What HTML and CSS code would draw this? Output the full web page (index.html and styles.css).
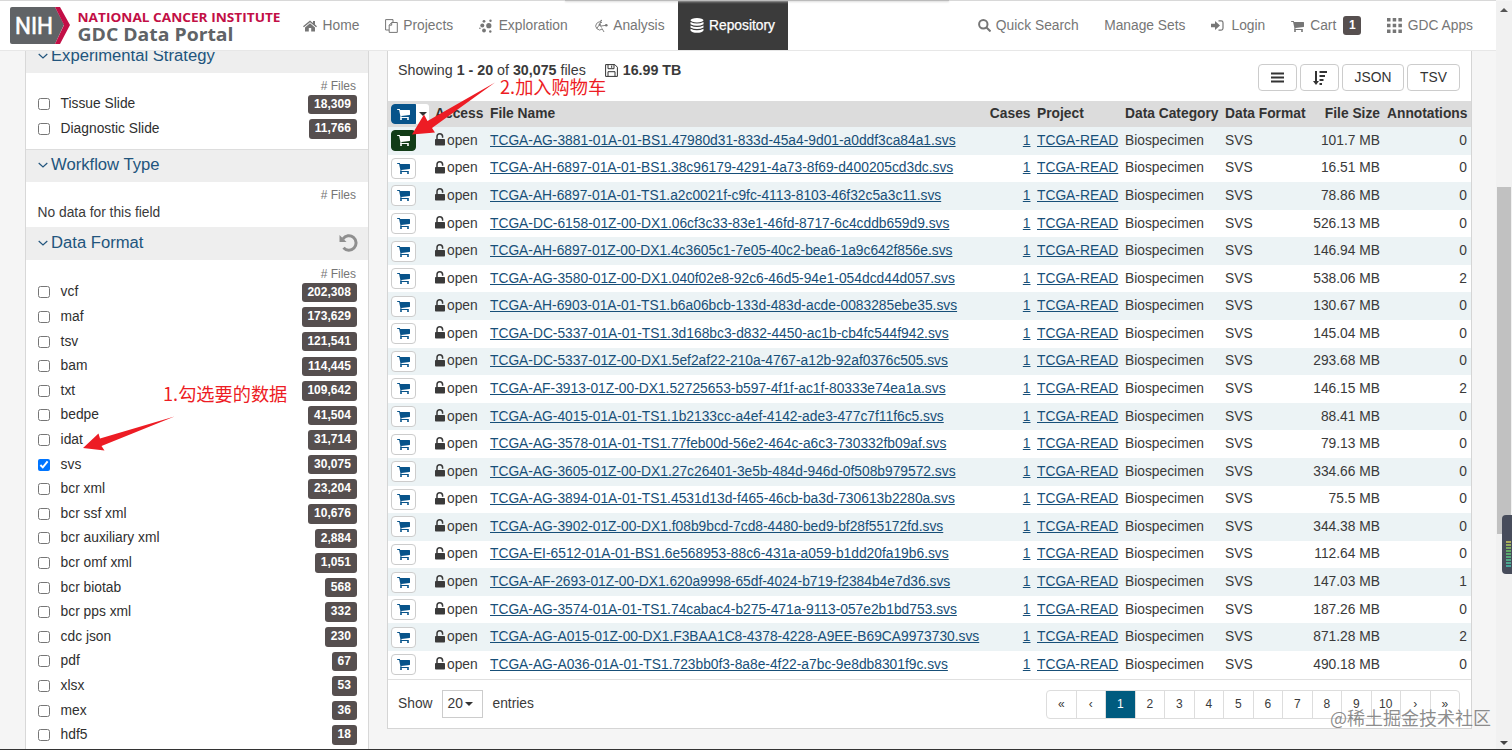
FILE: index.html
```html
<!DOCTYPE html>
<html lang="en">
<head>
<meta charset="utf-8">
<title>GDC Data Portal - Repository</title>
<link rel="stylesheet" href="styles.css">
</head>
<body>
<svg class="defs" aria-hidden="true">
  <symbol id="cart" viewBox="0 0 1664 1536"><path d="M640 1408q0 52-38 90t-90 38-90-38-38-90 38-90 90-38 90 38 38 90zm896 0q0 52-38 90t-90 38-90-38-38-90 38-90 90-38 90 38 38 90zm128-1088v512q0 24-16.500 42.500t-40.500 21.500l-1044 122q13 60 13 70 0 16-24 64h920q26 0 45 19t19 45-19 45-45 19h-1024q-26 0-45-19t-19-45q0-11 8-31.500t16-36 21.500-40 15.500-29.500l-177-823h-204q-26 0-45-19t-19-45 19-45 45-19h256q16 0 28.500 6.500t19.500 15.500 13 24.500 8 26 5.500 29.500 4.500 26h1201q26 0 45 19t19 45z"/></symbol>
  <symbol id="lock" viewBox="0 0 11 13"><path class="line" d="M2 6V3.600a2.700 2.700 0 0 1 5.600 0V4.800" stroke="currentColor" stroke-width="1.500"/><rect x="0" y="6" width="10" height="6.500" rx=".8"/></symbol>
</svg>

<header class="nav">
  <svg class="logo" width="272" height="40" viewBox="0 0 272 40">
    <path d="M2 1H45L54 18.500 45 38H2Q0 38 0 36V3Q0 1 2 1Z" fill="#606366"/>
    <path d="M45 1H50L60 19 50 38H45L54 19Z" fill="#c20f46"/>
    <text x="5" y="28" class="logo-nih" textLength="38" lengthAdjust="spacingAndGlyphs">NIH</text>
    <text x="67.500" y="15.500" class="logo-top" textLength="203" lengthAdjust="spacingAndGlyphs">NATIONAL CANCER INSTITUTE</text>
    <text x="67.500" y="34.500" class="logo-bottom" textLength="156" lengthAdjust="spacingAndGlyphs">GDC Data Portal</text>
  </svg>
  <nav class="menu">
    <a class="item home"><svg width="14" height="12" viewBox="0 0 14 12"><path d="M7 .5 0 6.300.9 7.300 7 2.300 13.100 7.300 14 6.300 12 4.600V1H10V3ZM7 3.300 2 7.400V11.500H5.800V8H8.200V11.500H12V7.400Z"/></svg>Home</a>
    <a class="item projects"><svg class="line" width="13" height="14" viewBox="0 0 13 14" stroke="currentColor"><path d="M4 11H.6V.6H8V3M6.700 3.500H12.300V13.400H4.200V6.200ZM6.700 3.500V6.200H4.200"/></svg>Projects</a>
    <a class="item exploration"><svg width="14" height="14" viewBox="0 0 14 14"><circle cx="5" cy="2.300" r="1.400"/><circle cx="11.500" cy="1.700" r="1.200"/><circle cx="3.300" cy="6.500" r="2"/><circle cx="9.800" cy="6.700" r="2.600"/><circle cx=".9" cy="9.300" r=".8"/><circle cx="5" cy="11.500" r="1.900"/><circle cx="11.300" cy="12.500" r="1.200"/></svg>Exploration</a>
    <a class="item analysis"><svg class="line" width="14" height="14" viewBox="0 0 14 14" stroke="currentColor"><path d="M8 3.600A4 4 0 1 0 8.300 10M3 9 5.700 5.500 7.500 8.500M5.700 5.500 7 1.500M7 7 12 6.300M8 9.500 10 13" stroke-width=".9"/><circle class="dot" cx="5.700" cy="5.700" r="1.100"/><circle class="dot" cx="7.300" cy="1.500" r=".7"/><circle class="dot" cx="12.300" cy="6.300" r="1.300"/><circle class="dot" cx="3" cy="9" r=".6"/></svg>Analysis</a>
    <a class="item repository"><svg width="14" height="15" viewBox="0 0 14 15"><ellipse cx="7" cy="2.300" rx="6.500" ry="2.200"/><path d="M.5 4Q7 7 13.500 4V6.200Q7 9.300.5 6.200ZM.5 7.500Q7 10.500 13.500 7.500V9.500Q7 12.500.5 9.500ZM.5 10.800Q7 13.900 13.500 10.800V12.500Q12 14.800 7 14.800T.5 12.500Z"/></svg>Repository</a>
  </nav>
  <div class="tools">
    <a class="item"><svg class="line" width="13" height="13" viewBox="0 0 13 13" stroke="currentColor" stroke-width="2"><circle cx="5.300" cy="5.300" r="4.200"/><path d="m8.500 8.500 4 4"/></svg>Quick Search</a>
    <a class="item sets">Manage Sets</a>
    <a class="item login"><svg width="13" height="11" viewBox="0 0 13 11"><path d="M0 3.700H4V1L9 5.500 4 10V7.300H0Z"/><path class="line" d="M7.500.9H10.200Q12 .9 12 2.700V8.300Q12 10.100 10.200 10.100H7.500" stroke="currentColor" stroke-width="1.200"/></svg>Login</a>
    <a class="item cartlink"><svg width="13" height="12"><use href="#cart"/></svg>Cart<b>1</b></a>
    <a class="item apps"><svg width="15" height="15" viewBox="0 0 15 15"><path d="M0 0h3.500v3.500H0zM5.700 0h3.500v3.500h-3.500zM11.400 0h3.500v3.500h-3.500zM0 5.700h3.500v3.500H0zM5.700 5.700h3.500v3.500h-3.500zM11.400 5.700h3.500v3.500h-3.500zM0 11.400h3.500v3.500H0zM5.700 11.400h3.500v3.500h-3.500zM11.400 11.400h3.500v3.500h-3.500z"/></svg>GDC Apps</a>
  </div>
  <div class="drop-shade"></div>
</header>

<main class="page">
  <aside class="facets">
    <section>
      <h2><svg class="line" width="10" height="7" viewBox="0 0 10 7"><path d="m.7 1 4.300 4 4.300-4"/></svg>Experimental Strategy</h2>
      <div class="count-head"># Files</div>
      <div class="facet-rows" data-list="strategy"></div>
    </section>
    <section class="workflow">
      <h2><svg class="line" width="10" height="7" viewBox="0 0 10 7"><path d="m.7 1 4.300 4 4.300-4"/></svg>Workflow Type</h2>
      <div class="count-head"># Files</div>
      <p class="empty">No data for this field</p>
    </section>
    <section class="format">
      <h2><svg class="line" width="10" height="7" viewBox="0 0 10 7"><path d="m.7 1 4.300 4 4.300-4"/></svg>Data Format
        <svg class="undo" width="19" height="18" viewBox="0 0 19 18"><path class="line" d="M4 4.800A7.200 7.200 0 1 1 4.500 13.800" stroke="#8f8f8f" stroke-width="3"/><path d="M.5 1V8H7.500Z" fill="#8f8f8f"/></svg></h2>
      <div class="count-head"># Files</div>
      <div class="facet-rows" data-list="format"></div>
    </section>
  </aside>

  <section class="results">
    <div class="summary">
      <div class="showing">Showing <b>1 - 20</b> of <b>30,075</b> files
        <svg class="disk line" width="13" height="13" viewBox="0 0 13 13" stroke="#333"><path d="M.6.6H9.800L12.400 3.200V12.400H.6ZM3 .6V4.700H9V.6M6.700 1.500V3.800M3 12.400V7.700H10V12.400"/></svg><b>16.99 TB</b></div>
      <div class="actions">
        <button class="w-icon"><svg width="13" height="11" viewBox="0 0 13 11"><path d="M0 .5h13v2H0zM0 4.500h13v2H0zM0 8.500h13v2H0z"/></svg></button>
        <button class="w-icon"><svg width="14" height="14" viewBox="0 0 14 14"><path d="M2 0H4V10H6L3 14 0 10H2ZM6.500 0H14V2H6.500ZM6.500 4H12V6H6.500ZM6.500 8H10.500V10H6.500ZM6.500 12H9V14H6.500Z"/></svg></button>
        <button class="w-json">JSON</button>
        <button class="w-tsv">TSV</button>
      </div>
    </div>
    <div class="row head">
      <span class="add-all"><i class="cart-btn blue"><svg><use href="#cart"/></svg></i><i class="caret-box"><i class="caret"></i></i></span>
      <span>Access</span><span>File Name</span><span class="r">Cases</span><span></span><span>Project</span><span>Data Category</span><span>Data Format</span><span class="r">File Size</span><span></span><span class="r">Annotations</span>
    </div>
    <div id="files"></div>
    <footer class="pager-bar">
      <span>Show</span><span class="select">20<i class="caret"></i></span><span>entries</span>
      <div class="pager"><a>«</a><a>‹</a><a class="on">1</a><a>2</a><a>3</a><a>4</a><a>5</a><a>6</a><a>7</a><a>8</a><a>9</a><a>10</a><a>›</a><a>»</a></div>
    </footer>
  </section>
</main>

<div class="scrollbar"><i class="up"></i><i class="thumb"></i><i class="down"></i></div>
<div class="meter"><i></i></div>
<svg class="arrows" width="1512" height="750" viewBox="0 0 1512 750">
  <path d="M495 82.500 432 128 435 132.500 412 134.500 424 114.500 427.500 121ZM174.500 416.500 101.500 446 104.500 450.500 83 448 98.500 433.500 100 438.500Z" fill="#ed1c24"/>
</svg>
<div class="note one">1.勾选要的数据</div>
<div class="note two">2.加入购物车</div>
<div class="watermark">@稀土掘金技术社区</div>
<div class="edge"></div>
<script src="app.js"></script>
</body>
</html>
```

FILE: styles.css
```css
* { box-sizing: border-box; }
body { margin: 0; width: 1512px; height: 750px; overflow: hidden; position: relative; background: #f5f5f5; color: #3a3a3a; font: 13.800px/20px "Liberation Sans", Arial, sans-serif; }
svg { fill: currentColor; flex: none; }
.line { fill: none; }
.dot { fill: currentColor; stroke: none; }
.defs { position: absolute; width: 0; height: 0; }

.nav { position: relative; z-index: 3; width: 1496px; height: 51px; display: flex; background: #fff; border-top: 1px solid #d8d8d8; border-bottom: 1px solid #e7e7e7; color: #767676; }
.logo { margin: 5px 0 0 10px; }
.logo text { font-family: "Open Sans", sans-serif; font-weight: 700; }
.logo .logo-nih { font: 400 24.500px Roboto, sans-serif; fill: #fff; stroke: #fff; stroke-width: .6px; }
.logo .logo-top { font-size: 13px; fill: #c20f46; }
.logo .logo-bottom { font-size: 18.500px; fill: #606366; }
.menu { display: flex; margin-left: 21px; }
.item { display: flex; align-items: center; height: 49px; white-space: nowrap; }
.home svg, .projects svg, .exploration svg, .analysis svg { margin-right: 5.500px; }
.projects { margin-left: 25.500px; }
.exploration { margin-left: 26px; }
.analysis { margin-left: 26px; }
.repository { position: relative; width: 110px; margin-left: 13px; padding-left: 12px; background: #3b3b3b; color: #fff; -webkit-text-stroke: .25px #fff; }
.repository svg { margin-right: 5.500px; }
.tools { display: flex; margin-left: auto; margin-right: 23px; }
.tools svg { margin-right: 5px; }
.sets { margin-left: 25.500px; }
.login { margin-left: 26px; }
.tools .login svg { margin-right: 7px; }
.cartlink { margin-left: 25.500px; }
.tools .cartlink svg { margin-right: 6.500px; }
.cartlink b { width: 18px; height: 19px; margin-left: 7px; border-radius: 3px; background: #564f4f; color: #fff; font-size: 12px; line-height: 19px; text-align: center; }
.apps { margin-left: 25.500px; }
.tools .apps svg { margin-right: 6px; }
.drop-shade { position: absolute; left: 565px; top: -1px; width: 384px; height: 1px; background: #bbb; box-shadow: 0 1px 2px #ccc; }

.page { display: flex; align-items: flex-start; height: 699px; overflow: hidden; padding-left: 25px; }
.facets { width: 344px; margin-top: -11px; height: 712px; background: #fff; border: 1px solid #d8d8d8; border-width: 0 1px; }
.facets h2 { display: flex; align-items: center; height: 33px; margin: 0; padding: 0 10px 1px 12px; background: #eee; color: #22557d; font-size: 16.650px; font-weight: 400; white-space: nowrap; }
.facets h2 > svg:first-child { margin-right: 3px; stroke: currentColor; stroke-width: 1.200; }
.undo { margin-left: auto; }
.count-head { height: 19px; padding: 5px 12px 0; color: #767676; font-size: 12px; line-height: 16px; text-align: right; }
.workflow { height: 78px; margin-top: 8px; border-top: 1px solid #ddd; }
.workflow h2 { height: 32px; padding-bottom: 2px; }
.empty { margin: 0 11.500px; line-height: 24px; }
.format .count-head { height: 20px; padding-top: 6px; }
.facet { display: flex; align-items: center; height: 24.600px; padding: 0 11.500px 0 11.600px; color: #2f2f2f; }
.facet input { width: 12px; height: 12px; margin: 0 11px 0 0; }
.facet b { margin-left: auto; padding: 0 5.700px; border-radius: 3px; background: #564f4f; color: #fff; font-size: 12px; line-height: 19.500px; }

.results { width: 1085px; height: 678px; margin-left: 18px; background: #fff; border: 1px solid #d5d5d5; border-top: 0; }
.summary { display: flex; justify-content: space-between; height: 50px; padding: 0 11px 0 10px; }
.showing { padding-top: 9px; font-size: 14.250px; white-space: nowrap; }
.disk { margin: 0 5px 0 15px; vertical-align: -2px; }
.actions { display: flex; gap: 3px; margin-top: 13px; height: 27px; }
button { display: flex; align-items: center; justify-content: center; padding: 0; border: 1px solid #ccc; border-radius: 4px; background: #fff; color: #333; font: inherit; }
.w-icon { width: 39px; }
.w-json { width: 62px; }
.w-tsv { width: 53px; }
.row { display: grid; grid-template-columns: 44px 55px 498.500px 42px 6.500px 88px 100px 88px 67px 7px 80px; align-items: center; height: 27.580px; padding-left: 3px; white-space: nowrap; }
.row:nth-child(odd) { background: #ecf3f5; }
.row.head { height: 26px; background: #dcdcdc; color: #333; font-weight: 700; }
.r { text-align: right; }
.row a { color: #174f78; text-decoration: underline; }
.add-all { display: flex; }
.cart-btn { display: flex; align-items: center; justify-content: center; width: 25px; height: 21px; padding-bottom: 1px; border: 1px solid #ccc; border-radius: 4px; background: #fff; color: #07538a; }
.cart-btn svg { width: 13px; height: 12px; }
.cart-btn.blue { background: #07538a; border-color: #07538a; color: #fff; border-radius: 4px 0 0 4px; height: 20px; }
.cart-btn.green { background: #123c17; border-color: #123c17; color: #fff; }
.caret-box { display: flex; align-items: center; justify-content: center; width: 13px; height: 20px; border-radius: 0 3px 3px 0; background: #fff; }
.caret { border: 4px solid transparent; border-top-color: #333; border-bottom: 0; }
.access { display: flex; align-items: center; gap: 1px; color: #3a3a3a; }
.access svg { margin-bottom: 2px; }
.pager-bar { display: flex; align-items: center; height: 50px; border-top: 1px solid #e0e0e0; padding: 0 11px 0 10px; }
.select { display: flex; align-items: center; gap: 2px; width: 41px; height: 28px; margin: 0 10px 0 9px; padding-left: 5px; border: 1px solid #ccc; }
.pager { display: flex; margin-left: auto; height: 29px; border: 1px solid #ddd; border-radius: 4px; font-size: 12px; }
.pager a { width: 29.500px; border-right: 1px solid #ddd; line-height: 27px; text-align: center; }
.pager a:last-child { border: 0; width: 28.500px; }
.pager .on { background: #005b7f; color: #fff; }

.scrollbar { position: absolute; z-index: 4; right: 0; top: 1px; width: 16px; height: 748px; background: #f1f1f1; }
.scrollbar i { position: absolute; left: 4px; border: 4px solid transparent; }
.scrollbar .up { top: 7px; border-top: 0; border-bottom-color: #555; }
.scrollbar .down { bottom: 4px; border-bottom: 0; border-top-color: #444; }
.scrollbar .thumb { left: 1px; top: 186px; width: 14px; height: 347px; border: 0; background: #c1c1c1; }
.meter { position: absolute; z-index: 5; left: 1502px; top: 515px; width: 14px; height: 59px; border-radius: 4px; background: #474c5b; }
.meter i { position: absolute; left: 4px; top: 25px; width: 5px; height: 28px; background: repeating-linear-gradient(#474c5b 0 1px, transparent 1px 3px), linear-gradient(#c0ad58, #5fa965 40%, #43a6a2); }
.arrows { position: absolute; z-index: 5; left: 0; top: 0; }
.note { position: absolute; z-index: 6; color: #ed1c24; font: 400 18.200px/24px "Noto Sans CJK SC", sans-serif; white-space: nowrap; }
.note.one { left: 163px; top: 381px; }
.note.two { left: 500px; top: 74px; }
.watermark { position: absolute; z-index: 6; left: 1330px; top: 705px; color: rgba(120,120,120,.85); font: 400 18px/24px "Noto Sans CJK SC", sans-serif; white-space: nowrap; }
.edge { position: absolute; z-index: 7; left: 0; bottom: 0; width: 1512px; height: 1px; background: #333; }
```

FILE: app.js
```js
const facets = {
  strategy: [['Tissue Slide', '18,309'], ['Diagnostic Slide', '11,766']],
  format: [['vcf', '202,308'], ['maf', '173,629'], ['tsv', '121,541'], ['bam', '114,445'], ['txt', '109,642'],
    ['bedpe', '41,504'], ['idat', '31,714'], ['svs', '30,075'], ['bcr xml', '23,204'], ['bcr ssf xml', '10,676'],
    ['bcr auxiliary xml', '2,884'], ['bcr omf xml', '1,051'], ['bcr biotab', '568'], ['bcr pps xml', '332'],
    ['cdc json', '230'], ['pdf', '67'], ['xlsx', '53'], ['mex', '36'], ['hdf5', '18']]
};
document.querySelectorAll('[data-list]').forEach(el => {
  el.innerHTML = facets[el.dataset.list].map(([name, n]) =>
    `<label class="facet"><input type="checkbox"${name === 'svs' ? ' checked' : ''}>${name}<b>${n}</b></label>`).join('');
});

const files = [
  ['TCGA-AG-3881-01A-01-BS1.47980d31-833d-45a4-9d01-a0ddf3ca84a1.svs', '101.7 MB', 0],
  ['TCGA-AH-6897-01A-01-BS1.38c96179-4291-4a73-8f69-d400205cd3dc.svs', '16.51 MB', 0],
  ['TCGA-AH-6897-01A-01-TS1.a2c0021f-c9fc-4113-8103-46f32c5a3c11.svs', '78.86 MB', 0],
  ['TCGA-DC-6158-01Z-00-DX1.06cf3c33-83e1-46fd-8717-6c4cddb659d9.svs', '526.13 MB', 0],
  ['TCGA-AH-6897-01Z-00-DX1.4c3605c1-7e05-40c2-bea6-1a9c642f856e.svs', '146.94 MB', 0],
  ['TCGA-AG-3580-01Z-00-DX1.040f02e8-92c6-46d5-94e1-054dcd44d057.svs', '538.06 MB', 2],
  ['TCGA-AH-6903-01A-01-TS1.b6a06bcb-133d-483d-acde-0083285ebe35.svs', '130.67 MB', 0],
  ['TCGA-DC-5337-01A-01-TS1.3d168bc3-d832-4450-ac1b-cb4fc544f942.svs', '145.04 MB', 0],
  ['TCGA-DC-5337-01Z-00-DX1.5ef2af22-210a-4767-a12b-92af0376c505.svs', '293.68 MB', 0],
  ['TCGA-AF-3913-01Z-00-DX1.52725653-b597-4f1f-ac1f-80333e74ea1a.svs', '146.15 MB', 2],
  ['TCGA-AG-4015-01A-01-TS1.1b2133cc-a4ef-4142-ade3-477c7f11f6c5.svs', '88.41 MB', 0],
  ['TCGA-AG-3578-01A-01-TS1.77feb00d-56e2-464c-a6c3-730332fb09af.svs', '79.13 MB', 0],
  ['TCGA-AG-3605-01Z-00-DX1.27c26401-3e5b-484d-946d-0f508b979572.svs', '334.66 MB', 0],
  ['TCGA-AG-3894-01A-01-TS1.4531d13d-f465-46cb-ba3d-730613b2280a.svs', '75.5 MB', 0],
  ['TCGA-AG-3902-01Z-00-DX1.f08b9bcd-7cd8-4480-bed9-bf28f55172fd.svs', '344.38 MB', 0],
  ['TCGA-EI-6512-01A-01-BS1.6e568953-88c6-431a-a059-b1dd20fa19b6.svs', '112.64 MB', 0],
  ['TCGA-AF-2693-01Z-00-DX1.620a9998-65df-4024-b719-f2384b4e7d36.svs', '147.03 MB', 1],
  ['TCGA-AG-3574-01A-01-TS1.74cabac4-b275-471a-9113-057e2b1bd753.svs', '187.26 MB', 0],
  ['TCGA-AG-A015-01Z-00-DX1.F3BAA1C8-4378-4228-A9EE-B69CA9973730.svs', '871.28 MB', 2],
  ['TCGA-AG-A036-01A-01-TS1.723bb0f3-8a8e-4f22-a7bc-9e8db8301f9c.svs', '490.18 MB', 0]
];
document.getElementById('files').innerHTML = files.map(([name, size, notes], i) => `<div class="row">
  <i class="cart-btn${i ? '' : ' green'}"><svg><use href="#cart"/></svg></i>
  <span class="access"><svg width="11" height="13"><use href="#lock"/></svg>open</span>
  <a>${name}</a><a class="r">1</a><span></span><a>TCGA-READ</a><span>Biospecimen</span><span>SVS</span>
  <span class="r">${size}</span><span></span><span class="r">${notes}</span></div>`).join('');
```
